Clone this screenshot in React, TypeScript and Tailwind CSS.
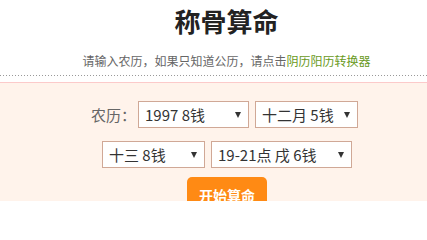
import React from "react";

function Sel({ w, text }: { w: string; text: string }) {
  return (
    <div
      className={`${w} h-[27px] flex items-center justify-between bg-white border border-[#d0a896] pl-[6px] pr-[7px] text-[15px] leading-none text-[#333]`}
    >
      <span>{text}</span>
      <span className="w-0 h-0 border-l-[3px] border-r-[3px] border-t-[6px] border-l-transparent border-r-transparent border-t-[#333]" />
    </div>
  );
}

export default function App() {
  return (
    <div
      className="w-[427px] h-[201px] overflow-hidden bg-white"
      style={{ fontFamily: '"Microsoft YaHei", "Noto Sans CJK SC", "Noto Sans", sans-serif' }}
    >
      <div className="pl-[26px] pt-[4px] text-center">
        <h1 className="text-[26px] leading-[34px] font-bold text-[#222]">称骨算命</h1>
        <p className="mt-[15px] text-[12px] leading-[16px] text-[#666]">
          请输入农历，如果只知道公历，请点击<span className="text-[#6a9a1c]">阴历阳历转换器</span>
        </p>
      </div>
      <div className="mt-[6px] h-px bg-[linear-gradient(to_right,#999_1px,transparent_1px)] bg-[length:3px_1px]" />
      <div className="mt-[6px] border-t border-[#fccaca] bg-[#fff3eb] h-[200px] pt-[18px]">
        <div className="flex justify-center items-center pl-[22px]">
          <span className="text-[15px] leading-none text-[#666] mr-[2px]">农历：</span>
          <div className="flex gap-[6px]">
            <Sel w="w-[111px]" text="1997 8钱" />
            <Sel w="w-[103px]" text="十二月 5钱" />
          </div>
        </div>
        <div className="mt-[13px] flex justify-center gap-[6px] pl-[27px]">
          <Sel w="w-[103px]" text="十三 8钱" />
          <Sel w="w-[141px]" text="19-21点 戌 6钱" />
        </div>
        <div className="mt-[9px] flex justify-center pl-[27px]">
          <button className="w-[80px] h-[36px] rounded-[5px] bg-[#ff8a14] text-white text-[14px] font-bold leading-none">
            开始算命
          </button>
        </div>
      </div>
    </div>
  );
}
